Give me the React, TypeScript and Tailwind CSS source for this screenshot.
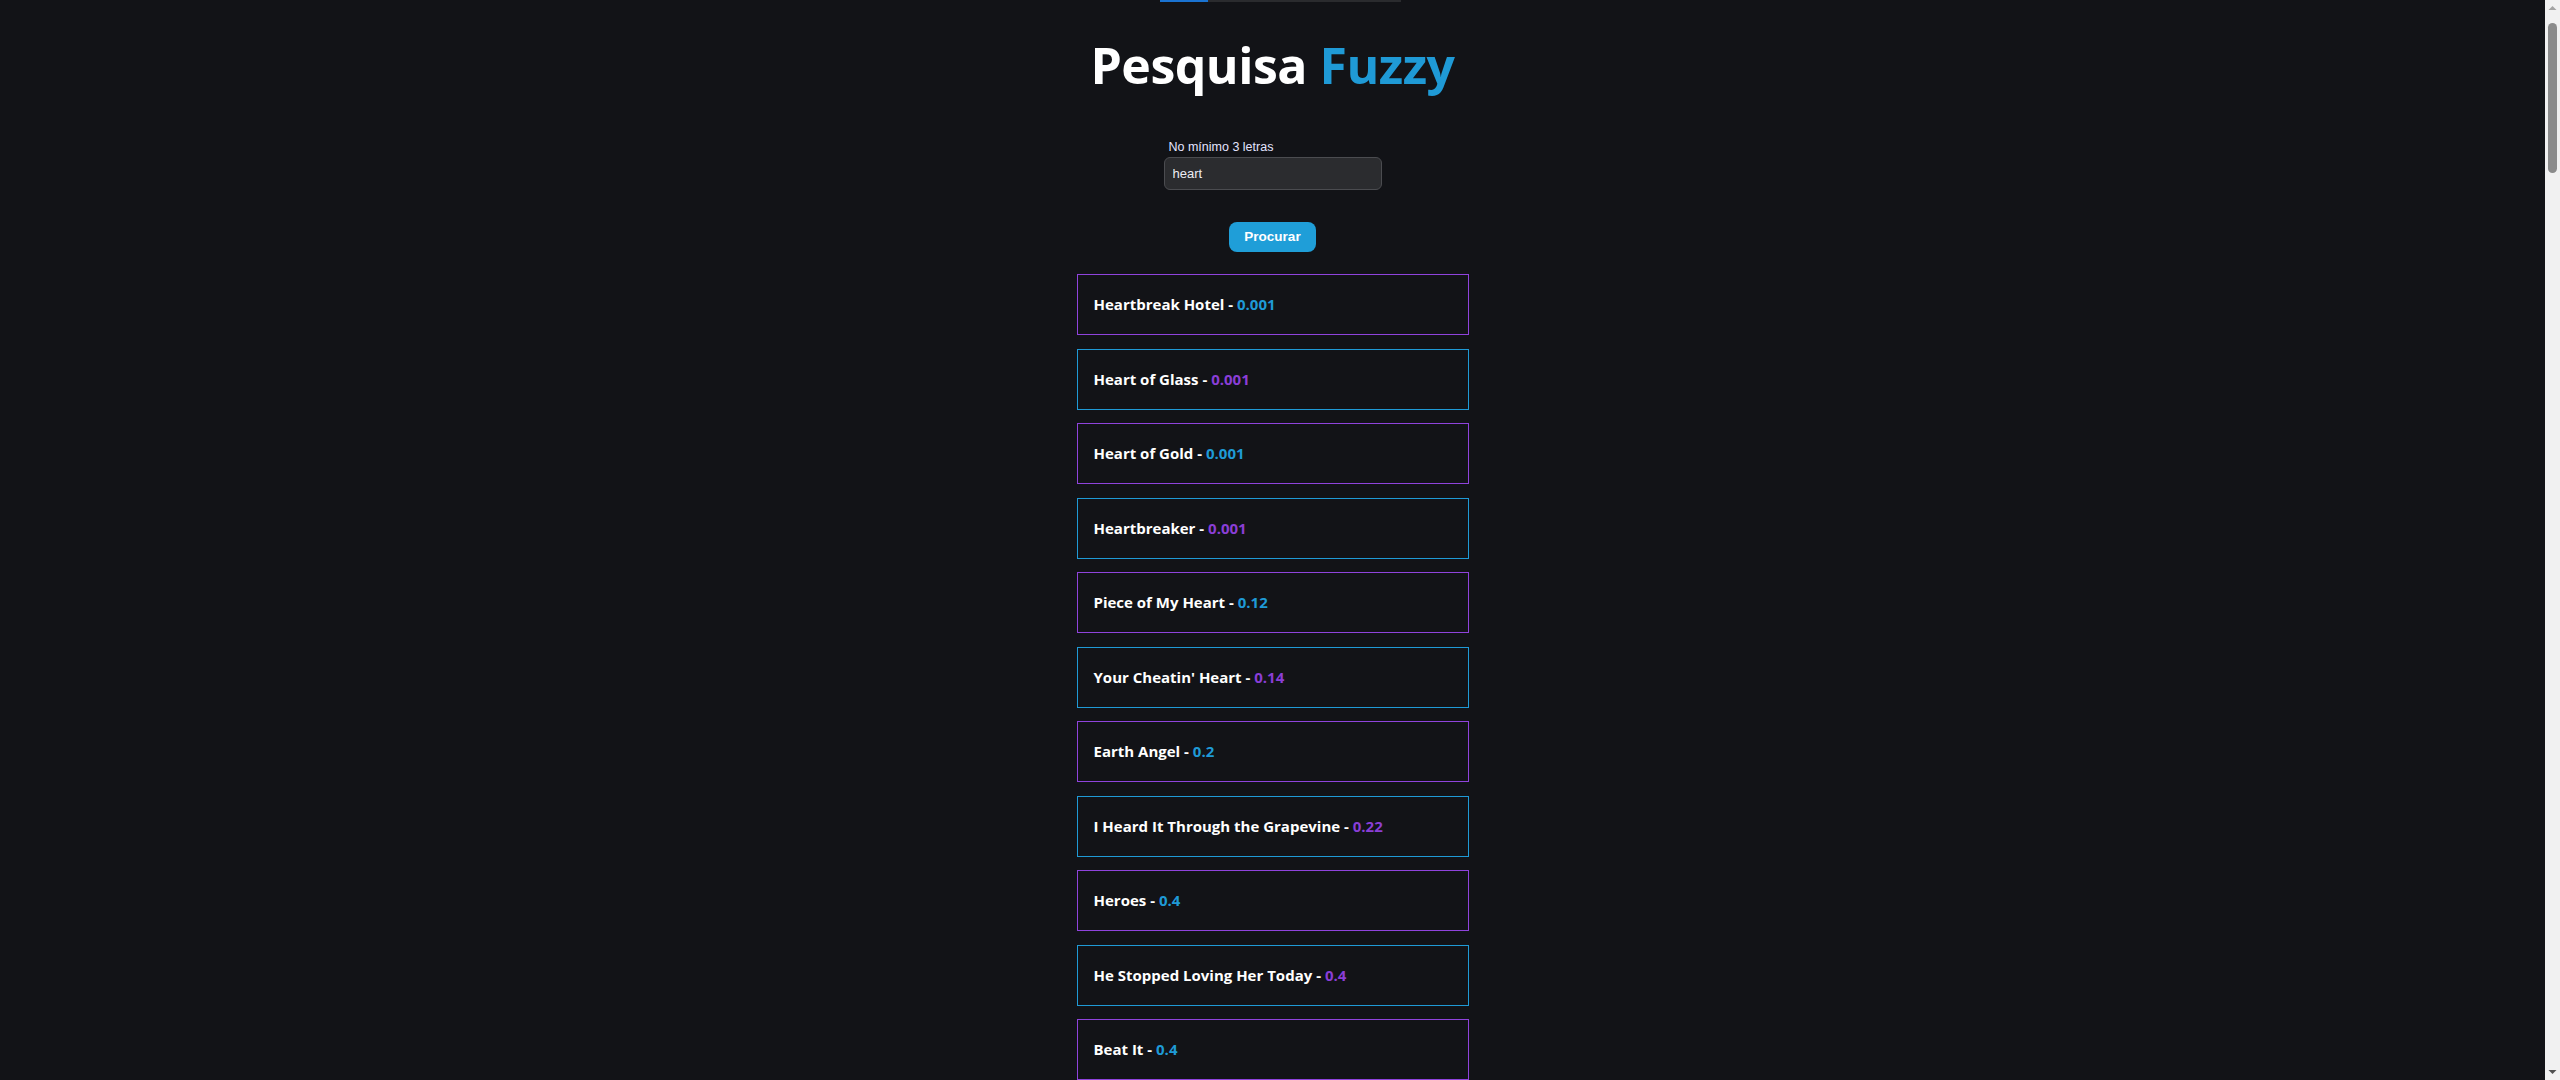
import React from "react";

const items: [string, string][] = [
  ["Heartbreak Hotel", "0.001"],
  ["Heart of Glass", "0.001"],
  ["Heart of Gold", "0.001"],
  ["Heartbreaker", "0.001"],
  ["Piece of My Heart", "0.12"],
  ["Your Cheatin' Heart", "0.14"],
  ["Earth Angel", "0.2"],
  ["I Heard It Through the Grapevine", "0.22"],
  ["Heroes", "0.4"],
  ["He Stopped Loving Her Today", "0.4"],
  ["Beat It", "0.4"],
];

export default function App() {
  return (
    <div className="flex h-screen bg-[#121317] text-white">
      <main className="flex flex-1 flex-col items-center overflow-hidden">
        <div className="ml-[15px] w-[241px] h-[2px] shrink-0 bg-[#2a2b2e] flex">
          <div className="w-[48px] h-full bg-[#1a73d1]" />
        </div>
        <h1
          className="mt-[38px] text-[50px] leading-none font-bold tracking-[-0.5px]"
          style={{ fontFamily: '"Open Sans", "Noto Sans", sans-serif' }}
        >
          Pesquisa <span className="text-[#1f9ad6]">Fuzzy</span>
        </h1>
        <div className="mt-[50px] flex flex-col w-[218px]" style={{ fontFamily: '"Liberation Sans", Arial, sans-serif' }}>
          <label className="pl-[5px] text-[12.5px] leading-[14px] text-[#e4e4ff]">No mínimo 3 letras</label>
          <input
            defaultValue="heart"
            className="mt-[3px] h-[33px] w-[218px] rounded-[6px] border border-[#4b4c50] bg-[#2b2c2f] px-[8px] text-[13px] text-[#ececf4] outline-none"
          />
        </div>
        <button
          className="mt-[32px] h-[31px] w-[87px] rounded-[8px] bg-[#1f9ed8] text-[13.5px] font-bold text-white"
          style={{ fontFamily: '"Liberation Sans", Arial, sans-serif' }}
        >
          Procurar
        </button>
        <div className="mt-[22px] flex w-[392px] shrink-0 flex-col gap-[13.5px]" style={{ fontFamily: '"Open Sans", "Noto Sans", sans-serif' }}>
          {items.map(([title, score], i) => {
            const even = i % 2 === 0;
            return (
              <div
                key={i}
                className={
                  even
                    ? "flex h-[61px] shrink-0 items-center border border-[#8f43dc] px-[16px]"
                    : "flex h-[61px] shrink-0 items-center border border-[#1f9ad6] px-[16px]"
                }
              >
                <span className="text-[15px] font-bold">
                  {title} -{" "}
                  <span className={even ? "text-[#1f9ad6]" : "text-[#8a3ed6]"}>{score}</span>
                </span>
              </div>
            );
          })}
        </div>
      </main>
      <aside className="flex w-[15px] shrink-0 flex-col items-center bg-[#f1f1f1]">
        <svg width="15" height="15" viewBox="0 0 15 15" className="shrink-0">
          <path d="M3.5 10 L7.5 6 L11.5 10 Z" fill="#a3a3a3" />
        </svg>
        <div className="mt-[8px] h-[150px] w-[9px] rounded-[5px] bg-[#8b8b8b]" />
        <div className="flex-1" />
        <svg width="15" height="15" viewBox="0 0 15 15" className="shrink-0">
          <path d="M3.5 5 L7.5 9 L11.5 5 Z" fill="#505050" />
        </svg>
      </aside>
    </div>
  );
}
